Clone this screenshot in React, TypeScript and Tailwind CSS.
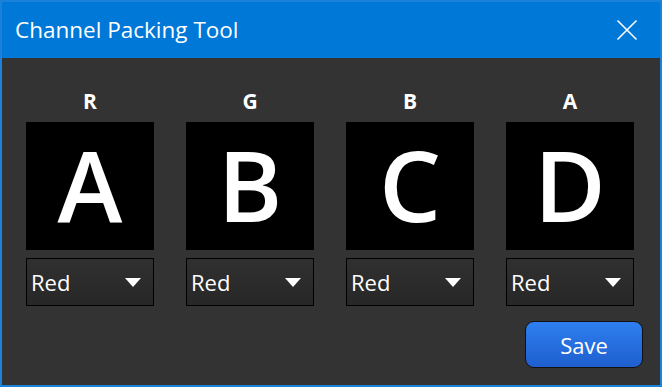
import React from "react";

const cols = [
  { label: "R", letter: "A" },
  { label: "G", letter: "B" },
  { label: "B", letter: "C" },
  { label: "A", letter: "D" },
];

export default function App() {
  return (
    <div
      className="w-[662px] h-[387px] border-2 border-[#1a82d9] bg-[#333333] flex flex-col overflow-hidden"
      style={{ fontFamily: '"Open Sans", "Noto Sans", sans-serif' }}
    >
      <div className="h-[56px] bg-[#0078d7] flex items-center justify-between pl-[13px] pr-[22px]">
        <span className="text-white text-[22.5px] leading-none">Channel Packing Tool</span>
        <svg width="22" height="22" viewBox="0 0 22 22" className="mt-[-1px]">
          <path d="M1.5 1.5 L20.5 20.5 M20.5 1.5 L1.5 20.5" stroke="white" strokeWidth="1.6" fill="none" />
        </svg>
      </div>
      <div className="flex-1 flex flex-col pl-[24px] pr-[26px]">
        <div className="flex gap-[32px] pt-[30px]">
          {cols.map((c) => (
            <div key={c.letter} className="w-[128px] flex flex-col items-center">
              <div className="h-[26px] text-white font-bold text-[21px] leading-[26px]">{c.label}</div>
              <div className="mt-[8px] w-[128px] h-[128px] bg-black flex items-center justify-center">
                <span className="text-white text-[98px] font-semibold leading-none mt-[-4px]">{c.letter}</span>
              </div>
              <div className="mt-[8px] w-[128px] h-[48px] border border-black bg-gradient-to-b from-[#303030] to-[#272727] flex items-center justify-between pl-[4px] pr-[12px]">
                <span className="text-white text-[22px] leading-none">Red</span>
                <svg width="16" height="9" viewBox="0 0 16 9">
                  <path d="M0 0 L16 0 L8 9 Z" fill="white" />
                </svg>
              </div>
            </div>
          ))}
        </div>
        <div className="flex justify-end mt-[15px]">
          <button className="w-[118px] h-[47px] mr-[-9px] rounded-[9px] border border-[#111] bg-gradient-to-b from-[#2e7ff0] to-[#1f5fcf] text-white text-[22px] leading-none">
            Save
          </button>
        </div>
      </div>
    </div>
  );
}
